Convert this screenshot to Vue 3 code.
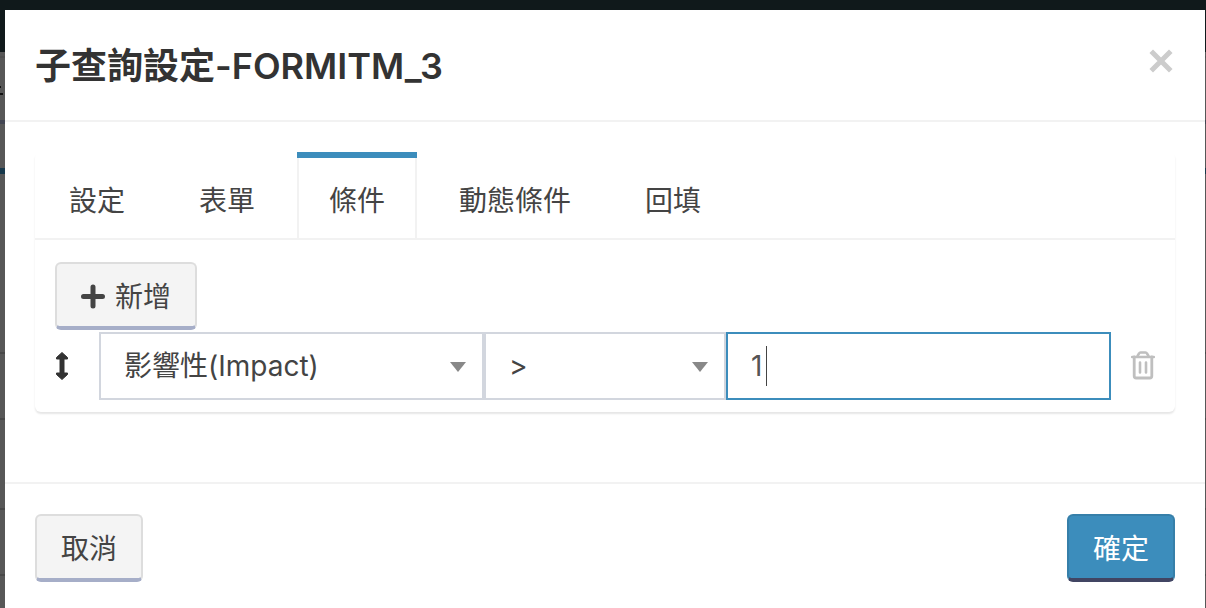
<script setup>
import { ref } from 'vue'

const tabs = ['設定', '表單', '條件', '動態條件', '回填']
const active = ref('條件')
const field = ref('影響性(Impact)')
const operator = ref('>')
const value = ref('1')
</script>

<template>
  <div class="page">
    <section class="modal" role="dialog" aria-modal="true" aria-labelledby="dialog-title">
      <header class="modal-header">
        <h1 id="dialog-title" class="title">子查詢設定-FORMITM_3</h1>
        <button class="close" type="button" aria-label="關閉">
          <svg width="26" height="24" viewBox="0 0 26 24">
            <path d="M4 4 20 20M20 4 4 20" fill="none" stroke="#ccc" stroke-width="5" stroke-linecap="square" stroke-linejoin="round" />
          </svg>
        </button>
      </header>

      <div class="modal-body">
        <div class="tab-box">
          <nav class="tabs" role="tablist">
            <button
              v-for="tab in tabs"
              :key="tab"
              type="button"
              role="tab"
              class="tab"
              :class="{ active: tab === active }"
              :aria-selected="tab === active"
              @click="active = tab"
            >{{ tab }}</button>
          </nav>

          <div class="panel" role="tabpanel">
            <button class="btn" type="button">
              <svg width="26" height="26" viewBox="0 0 26 26" aria-hidden="true">
                <path d="M12 3V22M2.500 12.500H21.500" fill="none" stroke="#444" stroke-width="5" stroke-linecap="round" />
              </svg>
              <span>新增</span>
            </button>

            <div class="condition">
              <svg class="handle" width="14" height="28" viewBox="0 0 14 28" aria-hidden="true">
                <path d="M7 .5 12.500 5.500V7H9V21H12.500V22.500L7 27.500 1.500 22.500V21H5V7H1.500V5.500Z" fill="#333" stroke="#333" stroke-width="1" stroke-linejoin="round" />
              </svg>
              <div class="fields">
                <div class="select-wrap">
                  <select v-model="field" class="control" aria-label="欄位">
                    <option>影響性(Impact)</option>
                  </select>
                </div>
                <div class="select-wrap">
                  <select v-model="operator" class="control" aria-label="運算子">
                    <option>&gt;</option>
                  </select>
                </div>
                <div class="value-wrap">
                  <input v-model="value" class="control current" type="text" aria-label="值" />
                  <span class="caret" aria-hidden="true"></span>
                </div>
              </div>
              <button class="remove" type="button" aria-label="刪除">
                <svg width="24" height="30" viewBox="0 0 24 30">
                  <g fill="none" stroke="#bfbfbf" stroke-linecap="round" stroke-linejoin="round">
                    <path d="M1 6H23" stroke-width="2.500" />
                    <path d="M6.500 5 8 2.500Q8.500 1.500 9.500 1.500H14.500Q15.500 1.500 16 2.500L17.500 5" stroke-width="2.500" />
                    <path d="M3.200 6V25Q3.200 27 5.200 27H18.800Q20.800 27 20.800 25V6" stroke-width="2.800" />
                    <path d="M9 11.500V21.500M15 11.500V21.500" stroke-width="2.600" />
                  </g>
                </svg>
              </button>
            </div>
          </div>
        </div>
      </div>

      <footer class="modal-footer">
        <button class="btn" type="button">取消</button>
        <button class="btn primary" type="button">確定</button>
      </footer>
    </section>
  </div>
</template>

<style>
body {
  margin: 0;
}
</style>

<style scoped>
* {
  box-sizing: border-box;
}

.page {
  min-height: 100vh;
  padding: 10px 1px 0 5px;
  display: flex;
  background:
    linear-gradient(#111, #111) 0 86px / 1px 2px no-repeat,
    linear-gradient(#111, #111) 0 93px / 3px 2px no-repeat,
    linear-gradient(
      #10191b 0 52px, #575757 52px 56px, #505050 56px 58px, #575757 58px 120px,
      #424552 120px 124px, #575757 124px 168px, #17384b 168px 174px,
      #575757 174px 352px, #484848 352px 354px, #575757 354px 418px,
      #484848 418px 420px, #575757 420px 508px, #484848 508px 510px,
      #575757 510px 574px, #484848 574px 576px, #575757 576px
    );
  font-family: Inter, "Noto Sans CJK TC", sans-serif;
  font-size: 28px;
  line-height: 40px;
  color: #444;
}

button,
input,
select {
  margin: 0;
  font: inherit;
  color: inherit;
}

button {
  cursor: pointer;
}

svg {
  display: block;
  flex: none;
}

.modal {
  flex: 1;
  min-width: 0;
  background: #fff;
}

.modal-header {
  display: flex;
  justify-content: space-between;
  align-items: flex-start;
  padding: 30px 30px 28px;
  border-bottom: 2px solid #f2f2f2;
}

.title {
  margin: 0;
  font-size: 36px;
  line-height: 52px;
  font-weight: 600;
  color: #333;
}

.close,
.remove {
  padding: 0;
  border: 0;
  background: none;
}

.close {
  margin-top: 9px;
}

.modal-body {
  padding: 30px 30px 70px;
}

.tab-box {
  border-radius: 6px;
  box-shadow: 0 2px 2px rgba(0, 0, 0, 0.1);
}

.tabs {
  display: flex;
  gap: 10px;
  padding-left: 2px;
  border-bottom: 2px solid #f2f2f2;
}

.tab {
  padding: 29px 32px 17px;
  border: 0;
  background: none;
}

.tab.active {
  background:
    linear-gradient(#3c8dbc, #3c8dbc) top / 100% 6px no-repeat,
    linear-gradient(#f2f2f2, #f2f2f2) left / 2px 100% no-repeat,
    linear-gradient(#f2f2f2, #f2f2f2) right / 2px 100% no-repeat;
}

.panel {
  padding: 22px 20px 12px;
}

.btn {
  display: flex;
  align-items: center;
  gap: 8px;
  padding: 13px 24px 9px;
  border: 2px solid #ddd;
  border-bottom: 4px solid #a6aec8;
  border-radius: 6px;
  background: #f4f4f4;
}

.btn.primary {
  border-color: #367fa9;
  border-bottom-color: #414563;
  background: #3c8dbc;
  color: #fff;
}

.condition {
  display: flex;
  align-items: center;
  margin-top: 2px;
}

.handle {
  margin-right: 30px;
}

.fields {
  flex: 1;
  display: grid;
  grid-template-columns: 385fr 242fr 385fr;
}

.select-wrap,
.value-wrap {
  position: relative;
  min-width: 0;
}

.select-wrap::after {
  content: "";
  position: absolute;
  top: 30px;
  right: 18px;
  border: 8px solid transparent;
  border-top: 10px solid #888;
  border-bottom: 0;
  pointer-events: none;
}

.control {
  display: block;
  width: 100%;
  height: 68px;
  padding: 0 23px;
  border: 2px solid #d2d6de;
  border-radius: 0;
  outline: 0;
  appearance: none;
  background: #fff;
}

.control.current {
  border-color: #3c8dbc;
  color: #555;
}

.caret {
  position: absolute;
  top: 14px;
  left: 40px;
  width: 1px;
  height: 40px;
  background: #444;
}

.remove {
  margin: 0 0 0 20px;
}

.modal-footer {
  display: flex;
  justify-content: space-between;
  padding: 30px 30px 26px;
  border-top: 2px solid #f2f2f2;
}
</style>
